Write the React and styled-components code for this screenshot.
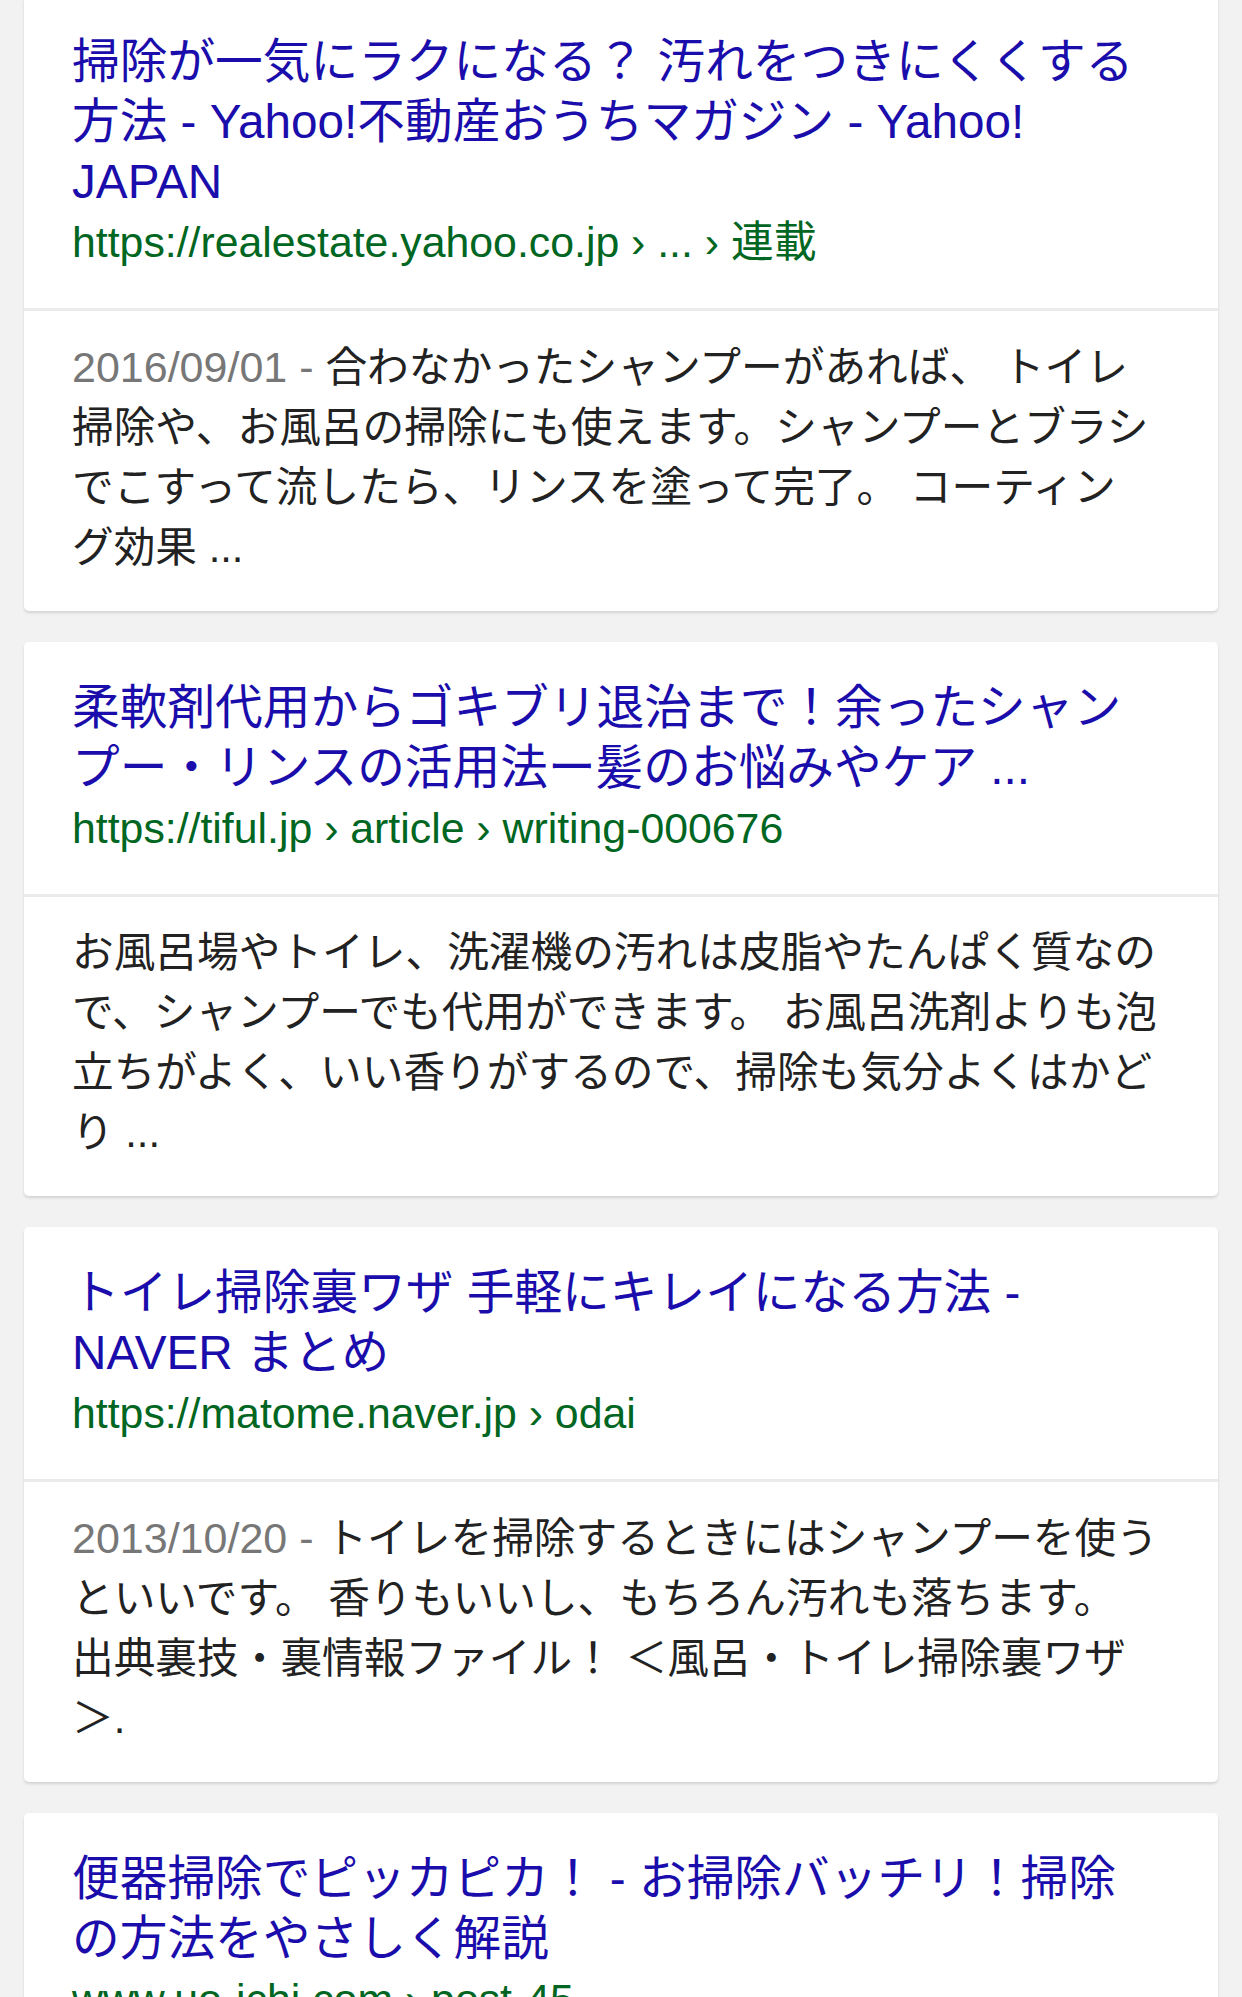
import React from "react";
import styled, { createGlobalStyle } from "styled-components";

const GlobalStyle = createGlobalStyle`
  html, body {
    margin: 0;
    padding: 0;
    background: #f2f2f2;
  }
  body {
    font-family: "Liberation Sans", "Noto Sans CJK JP", sans-serif;
    -webkit-font-smoothing: antialiased;
  }
`;

const Page = styled.div`
  display: flex;
  flex-direction: column;
  gap: 31px;
  padding: 0 24px;
  margin-top: -4px;
`;

const Card = styled.div`
  background: #fff;
  border-radius: 5px;
  box-shadow: 0 2px 3px rgba(0, 0, 0, 0.13);
  overflow: hidden;
`;

const Header = styled.div`
  padding: 36px 40px 36px 48px;
  border-bottom: 3px solid #ebebeb;
`;

const Title = styled.div`
  font-size: 47.7px;
  line-height: 60px;
  color: #1a0dab;
  white-space: pre-line;
`;

const Url = styled.div`
  font-size: 42.8px;
  line-height: 60px;
  color: #006621;
  white-space: nowrap;
`;

const Snippet = styled.div`
  padding: 26px 40px 33px 48px;
  font-size: 41.7px;
  line-height: 60px;
  color: #222;
  white-space: pre-line;
`;

// 날짜 부분은 회색
const DateText = styled.span`
  font-size: 43px;
  color: #777;
`;

const results = [
  {
    title:
      "掃除が一気にラクになる？ 汚れをつきにくくする\n方法 - Yahoo!不動産おうちマガジン - Yahoo!\nJAPAN",
    url: "https://realestate.yahoo.co.jp › ... › 連載",
    date: "2016/09/01",
    snippet:
      "合わなかったシャンプーがあれば、 トイレ\n掃除や、お風呂の掃除にも使えます。シャンプーとブラシ\nでこすって流したら、リンスを塗って完了。 コーティン\nグ効果 ...",
  },
  {
    title:
      "柔軟剤代用からゴキブリ退治まで！余ったシャン\nプー・リンスの活用法ー髪のお悩みやケア ...",
    url: "https://tiful.jp › article › writing-000676",
    snippet:
      "お風呂場やトイレ、洗濯機の汚れは皮脂やたんぱく質なの\nで、シャンプーでも代用ができます。 お風呂洗剤よりも泡\n立ちがよく、いい香りがするので、掃除も気分よくはかど\nり ...",
  },
  {
    title: "トイレ掃除裏ワザ 手軽にキレイになる方法 -\nNAVER まとめ",
    url: "https://matome.naver.jp › odai",
    date: "2013/10/20",
    snippet:
      "トイレを掃除するときにはシャンプーを使う\nといいです。 香りもいいし、もちろん汚れも落ちます。\n出典裏技・裏情報ファイル！ ＜風呂・トイレ掃除裏ワザ\n＞.",
  },
  {
    title: "便器掃除でピッカピカ！ - お掃除バッチリ！掃除\nの方法をやさしく解説",
    url: "www.uo-ichi.com › post-45",
    snippet: "",
  },
];

function Result({ item }) {
  return (
    <Card>
      <Header>
        <Title>{item.title}</Title>
        <Url>{item.url}</Url>
      </Header>
      {item.snippet && (
        <Snippet>
          {item.date && <DateText>{item.date} - </DateText>}
          {item.snippet}
        </Snippet>
      )}
    </Card>
  );
}

export default function App() {
  return (
    <>
      <GlobalStyle />
      <Page>
        {results.map((item, i) => (
          <Result key={i} item={item} />
        ))}
      </Page>
    </>
  );
}
